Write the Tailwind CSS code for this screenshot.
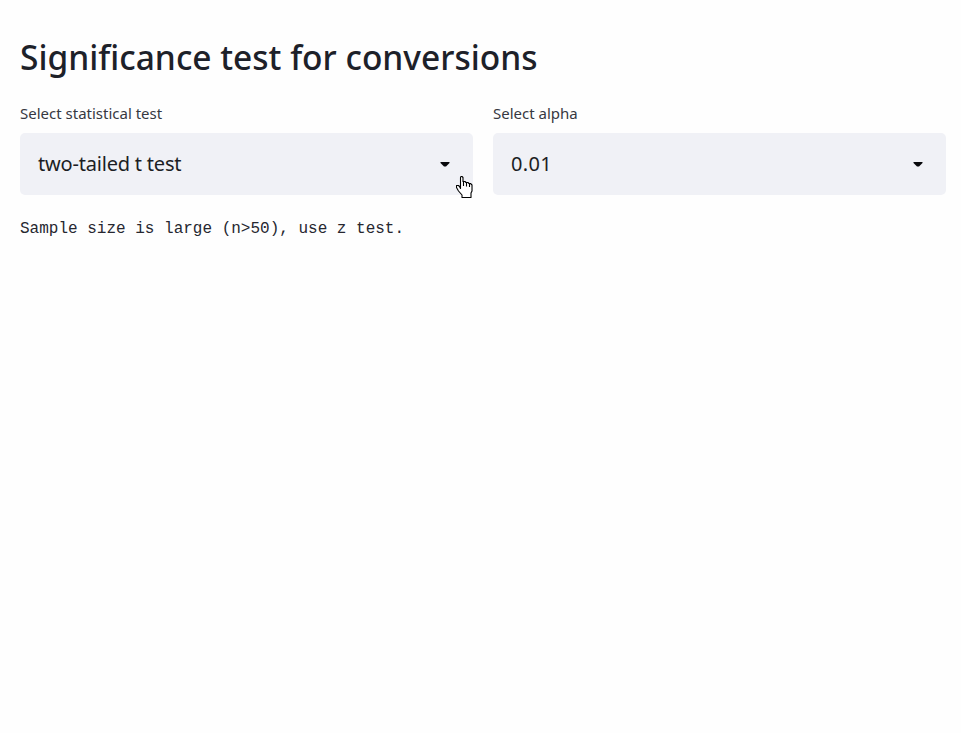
<!DOCTYPE html>
<html lang="en">
<head>
<meta charset="utf-8">
<title>Significance test</title>
<script src="https://cdn.jsdelivr.net/npm/@tailwindcss/browser@4"></script>
</head>
<body class="relative h-screen overflow-hidden bg-[#fefefe] font-['Noto_Sans',sans-serif] text-[#262730]">
<main class="pt-9 pl-5 pr-[15px]">
  <h1 class="h-11 whitespace-nowrap text-[33.5px] leading-[43px] font-medium text-[#1d2129]">Significance test for conversions</h1>
  <div class="mt-5 grid grid-cols-2 gap-5">
    <div>
      <label class="block h-[33px] text-[15px] leading-[27px] text-[#363842]">Select statistical test</label>
      <div class="flex h-[62px] items-center justify-between rounded-[5px] bg-[#f0f1f6] pl-[18px] pr-[23px] text-xl text-[#1c1e24]">
        <span class="tracking-[-0.2px]">two-tailed t test</span>
        <svg class="h-[5px] w-[10px]" viewBox="0 0 10 5"><path d="M.5 0h9v1L6 4.500H4L.5 1z" fill="#08090c"/></svg>
      </div>
    </div>
    <div>
      <label class="block h-[33px] text-[15px] leading-[27px] text-[#363842]">Select alpha</label>
      <div class="flex h-[62px] items-center justify-between rounded-[5px] bg-[#f0f1f6] pl-[18px] pr-[23px] text-xl text-[#1c1e24]">
        <span class="tracking-[0.3px]">0.01</span>
        <svg class="h-[5px] w-[10px]" viewBox="0 0 10 5"><path d="M.5 0h9v1L6 4.500H4L.5 1z" fill="#08090c"/></svg>
      </div>
    </div>
  </div>
  <p class="mt-[22px] font-['Liberation_Mono',monospace] text-base leading-6">Sample size is large (n&gt;50), use z test.</p>
</main>
<svg class="absolute left-[456px] top-[176px] h-[22px] w-[17px]" viewBox="0 0 17 22" fill="#fff" stroke="#000" stroke-width="1.1" stroke-linejoin="round"><path d="M4.500 12V1.500L5 .5h1l1 1V5.500h2l1 1h2l1 1h1.500l1.500 1.500v6l-1 2v4.500h-9V19L2.500 15l-2-3.500v-2h2l1 1 1 2z"/><path d="M7.500 5v5M10.500 6v4.500M13.500 7.500v3.500" fill="none"/></svg>
</body>
</html>
